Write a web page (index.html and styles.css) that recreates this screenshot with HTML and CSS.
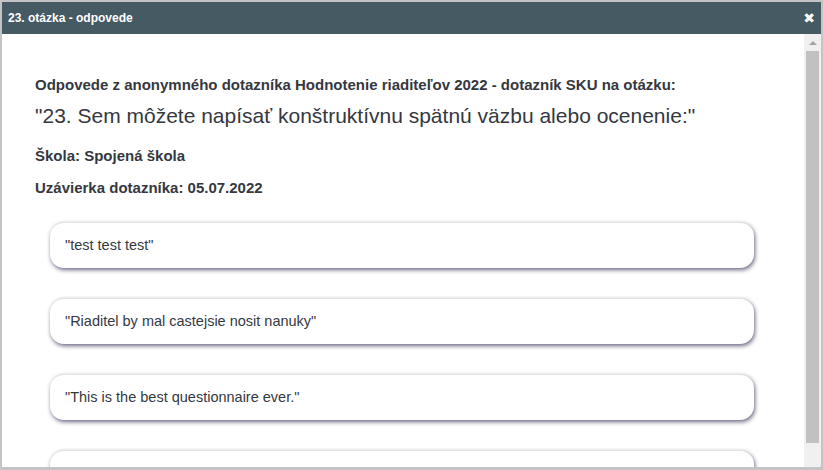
FILE: index.html
```html
<!DOCTYPE html>
<html lang="sk">
<head>
  <meta charset="UTF-8">
  <title>23. otázka - odpovede</title>
  <link rel="stylesheet" href="styles.css">
</head>
<body>
  <div class="dialog">
    <div class="dialog-header">
      <span class="dialog-title">23. otázka - odpovede</span>
      <span class="dialog-close">&#10006;</span>
    </div>
    <div class="dialog-body">
      <div class="content">
        <p class="intro">Odpovede z anonymného dotazníka Hodnotenie riaditeľov 2022 - dotazník SKU na otázku:</p>
        <p class="question">"23. Sem môžete napísať konštruktívnu spätnú väzbu alebo ocenenie:"</p>
        <p class="meta">Škola: Spojená škola</p>
        <p class="meta">Uzávierka dotazníka: 05.07.2022</p>
        <div class="answers">
          <div class="answer">"test test test"</div>
          <div class="answer">"Riaditel by mal castejsie nosit nanuky"</div>
          <div class="answer">"This is the best questionnaire ever."</div>
          <div class="answer"></div>
        </div>
      </div>
      <!-- fake scrollbar -->
      <div class="scrollbar">
        <div class="scroll-arrow"></div>
        <div class="scroll-thumb"></div>
      </div>
    </div>
  </div>
</body>
</html>
```

FILE: styles.css
```css
* {
  margin: 0;
  padding: 0;
  box-sizing: border-box;
}
body {
  font-family: 'Liberation Sans', Arial, sans-serif;
  background: #fff;
  width: 823px;
  height: 470px;
  overflow: hidden;
}
.dialog {
  width: 823px;
  height: 470px;
  border: 2px solid #c4c4c4;
  border-bottom-width: 3px;
  display: flex;
  flex-direction: column;
  background: #fff;
}
.dialog-header {
  height: 32px;
  background: #465a64;
  color: #fff;
  display: flex;
  align-items: center;
  justify-content: space-between;
  padding: 0 6px 0 6px;
  flex-shrink: 0;
}
.dialog-title {
  font-size: 12px;
  font-weight: bold;
}
.dialog-close {
  font-size: 14px;
  font-weight: bold;
  font-family: 'DejaVu Sans', sans-serif;
}
.dialog-body {
  flex: 1;
  display: flex;
  overflow: hidden;
}
.content {
  flex: 1;
  padding: 41px 0 0 33px;
  color: #35383f;
  overflow: hidden;
}
.intro {
  font-size: 15px;
  font-weight: bold;
  line-height: 20px;
}
.question {
  font-size: 21px;
  line-height: 26px;
  margin-top: 8px;
}
.meta {
  font-size: 15px;
  font-weight: bold;
  line-height: 20px;
  margin-top: 14px;
}
.question + .meta {
  margin-top: 17px;
}
.meta + .meta {
  margin-top: 12px;
}
.answers {
  display: flex;
  flex-direction: column;
  gap: 30px;
  padding: 24px 0 0 15px;
  width: 719px;
}
.answer {
  height: 46px;
  border-radius: 14px;
  background: #fff;
  box-shadow: 1px 2px 4px rgba(60, 55, 90, 0.75);
  border-top: 1px solid #e2e2e2;
  display: flex;
  align-items: center;
  padding-left: 15px;
  padding-bottom: 1px;
  font-size: 14.5px;
  flex-shrink: 0;
}
.scrollbar {
  width: 17px;
  background: #f0f0f0;
  display: flex;
  flex-direction: column;
  align-items: center;
  flex-shrink: 0;
}
.scroll-arrow {
  margin-top: 7px;
  width: 0;
  height: 0;
  border-left: 4px solid transparent;
  border-right: 4px solid transparent;
  border-bottom: 4px solid #a3a3a3;
}
.scroll-thumb {
  margin-top: 6px;
  width: 13px;
  height: 392px;
  background: #c1c1c1;
}
```
